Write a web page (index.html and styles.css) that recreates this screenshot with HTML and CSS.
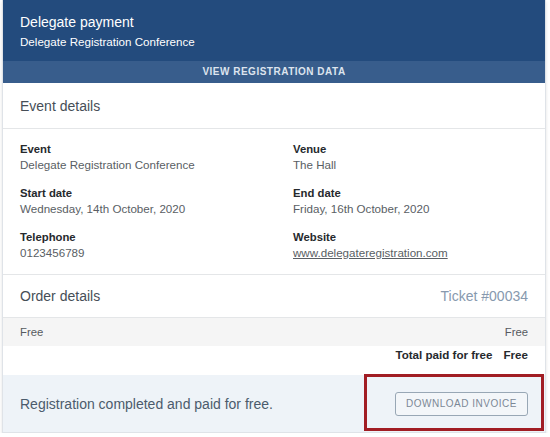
FILE: index.html
```html
<!DOCTYPE html>
<html>
<head>
<meta charset="utf-8">
<link rel="stylesheet" href="styles.css">
</head>
<body>
<div class="card">
  <div class="header">
    <div class="title">Delegate payment</div>
    <div class="subtitle">Delegate Registration Conference</div>
  </div>
  <div class="viewbar">VIEW REGISTRATION DATA</div>
  <div class="section-head">Event details</div>
  <div class="details">
    <div class="item"><div class="label">Event</div><div class="value">Delegate Registration Conference</div></div>
    <div class="item"><div class="label">Venue</div><div class="value">The Hall</div></div>
    <div class="item"><div class="label">Start date</div><div class="value">Wednesday, 14th October, 2020</div></div>
    <div class="item"><div class="label">End date</div><div class="value">Friday, 16th October, 2020</div></div>
    <div class="item"><div class="label">Telephone</div><div class="value">0123456789</div></div>
    <div class="item"><div class="label">Website</div><div class="value link">www.delegateregistration.com</div></div>
  </div>
  <div class="section-head order-head"><span>Order details</span><span class="ticket">Ticket #00034</span></div>
  <div class="line-row"><span>Free</span><span>Free</span></div>
  <div class="total-row"><span class="total-label">Total paid for free</span><span>Free</span></div>
  <div class="footer">
    <span class="done">Registration completed and paid for free.</span>
    <button class="invoice">DOWNLOAD INVOICE</button>
    <div class="highlight"></div>
  </div>
</div>
</body>
</html>
```
FILE: styles.css
```css
* { box-sizing: border-box; }
body {
  margin: 0;
  background: #ffffff;
  font-family: "Liberation Sans", Arial, sans-serif;
}
.card {
  margin-left: 2px;
  width: 544px;
  border: 1px solid #dfe3e8;
  border-top: none;
  box-shadow: 0 2px 3px rgba(0,0,0,0.12);
  background: #fff;
}
.header {
  height: 61px;
  background: #234b7d;
  color: #fff;
  padding: 12px 17px 0;
}
.title {
  font-size: 14px;
  line-height: 20px;
}
.subtitle {
  font-size: 11.6px;
  line-height: 16px;
  margin-top: 2px;
}
.viewbar {
  height: 22px;
  background: #385d8c;
  color: #dde4ee;
  font-size: 10px;
  font-weight: bold;
  letter-spacing: 0.5px;
  line-height: 22px;
  text-align: center;
}
.section-head {
  height: 46px;
  padding: 0 17px;
  display: flex;
  align-items: center;
  font-size: 14px;
  color: #464e57;
  border-bottom: 1px solid #e4e6e8;
}
.details {
  display: grid;
  grid-template-columns: 273px 1fr;
  row-gap: 12px;
  padding: 12px 17px 13px;
  border-bottom: 1px solid #e4e6e8;
}
.label {
  font-size: 11.3px;
  line-height: 16px;
  font-weight: bold;
  color: #26292d;
}
.value {
  font-size: 11.6px;
  line-height: 16px;
  color: #595e64;
}
.link { text-decoration: underline; }
.order-head {
  height: 43px;
  justify-content: space-between;
}
.ticket { color: #8799ae; }
.line-row {
  height: 28px;
  background: #f5f5f5;
  padding: 0 17px;
  display: flex;
  align-items: center;
  justify-content: space-between;
  font-size: 11.3px;
  color: #555a60;
}
.total-row {
  height: 29px;
  padding: 1px 17px 0;
  display: flex;
  justify-content: flex-end;
  gap: 11px;
  font-size: 11.6px;
  line-height: 16px;
  font-weight: bold;
  color: #26292d;
}
.footer {
  position: relative;
  height: 57px;
  background: #eef3f8;
  padding: 0 17px;
  display: flex;
  align-items: center;
  justify-content: space-between;
}
.done {
  font-size: 14px;
  color: #4b5b6c;
}
.invoice {
  height: 24px;
  width: 133px;
  border: 1px solid #98a7b5;
  border-radius: 3px;
  background: #f3f6f9;
  color: #7c8896;
  font-family: "Liberation Sans", Arial, sans-serif;
  font-size: 10px;
  letter-spacing: 0.5px;
  padding: 0;
}
.highlight {
  position: absolute;
  left: 361px;
  top: -1px;
  width: 180px;
  height: 57px;
  border: 3px solid #a11d24;
}
```
